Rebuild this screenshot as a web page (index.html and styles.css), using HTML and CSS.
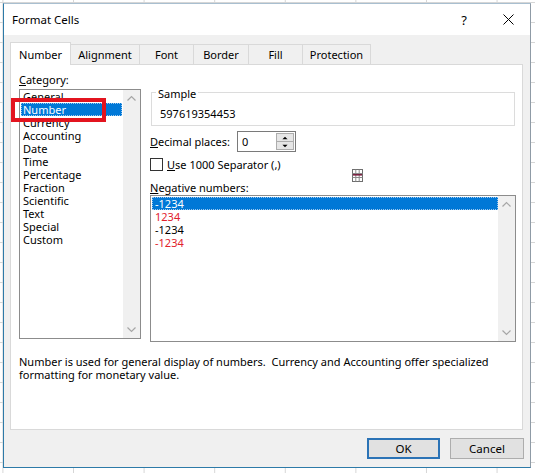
FILE: index.html
```html
<!DOCTYPE html>
<html lang="en">
<head>
  <meta charset="UTF-8" />
  <title>Format Cells</title>
  <link rel="stylesheet" href="styles.css">
</head>
<body>
  <div class="dialog">
    <!-- title bar -->
    <div class="titlebar">
      <span class="title">Format Cells</span>
      <span class="help">?</span>
      <svg class="close" width="11" height="11" viewBox="0 0 11 11">
        <path d="M0.5 0.5 L10.5 10.5 M10.5 0.5 L0.5 10.5" stroke="#000" stroke-width="1" fill="none" />
      </svg>
    </div>

    <div class="dialog-body">
      <div class="tabs">
        <div class="tab selected tab-number">Number</div>
        <div class="tab tab-alignment">Alignment</div>
        <div class="tab tab-font">Font</div>
        <div class="tab tab-border">Border</div>
        <div class="tab tab-fill">Fill</div>
        <div class="tab tab-protection">Protection</div>
      </div>

      <div class="panel">
        <div class="panel-main">
          <!-- category -->
          <div class="col-left">
            <div class="label"><u>C</u>ategory:</div>
            <div class="listbox cat-list">
              <div class="list-items">
                <div class="item">General</div>
                <div class="item selected">Number</div>
                <div class="item">Currency</div>
                <div class="item">Accounting</div>
                <div class="item">Date</div>
                <div class="item">Time</div>
                <div class="item">Percentage</div>
                <div class="item">Fraction</div>
                <div class="item">Scientific</div>
                <div class="item">Text</div>
                <div class="item">Special</div>
                <div class="item">Custom</div>
              </div>
              <div class="scrollbar">
                <svg width="17" height="17" viewBox="0 0 17 17"><polyline points="4.5,10.5 8.5,6.5 12.5,10.5" fill="none" stroke="#a6a6a6" stroke-width="1.2" /></svg>
                <svg width="17" height="17" viewBox="0 0 17 17"><polyline points="4.5,6.5 8.5,10.5 12.5,6.5" fill="none" stroke="#a6a6a6" stroke-width="1.2" /></svg>
              </div>
            </div>
          </div>

          <!-- options -->
          <div class="col-right">
            <div class="group">
              <div class="group-title">Sample</div>
              <div class="sample-value">597619354453</div>
            </div>

            <div class="decimal-row">
              <span class="decimal-label"><u>D</u>ecimal places:</span>
              <div class="spin-input">
                <span class="spin-value">0</span>
                <div class="spinner">
                  <div class="spin-btn"><svg width="14" height="7" viewBox="0 0 14 7"><polygon points="4,5 10,5 7,2" fill="#000" /></svg></div>
                  <div class="spin-btn"><svg width="14" height="7" viewBox="0 0 14 7"><polygon points="4,2 10,2 7,5" fill="#000" /></svg></div>
                </div>
              </div>
            </div>

            <div class="check-row">
              <span class="checkbox"></span>
              <span><u>U</u>se 1000 Separator (,)</span>
            </div>

            <div class="label neg-label"><u>N</u>egative numbers:</div>
            <div class="listbox neg-list">
              <div class="list-items">
                <div class="item selected">-1234</div>
                <div class="item red">1234</div>
                <div class="item">-1234</div>
                <div class="item red">-1234</div>
              </div>
              <div class="scrollbar">
                <svg width="17" height="17" viewBox="0 0 17 17"><polyline points="4.5,10.5 8.5,6.5 12.5,10.5" fill="none" stroke="#a6a6a6" stroke-width="1.2" /></svg>
                <svg width="17" height="17" viewBox="0 0 17 17"><polyline points="4.5,6.5 8.5,10.5 12.5,6.5" fill="none" stroke="#a6a6a6" stroke-width="1.2" /></svg>
              </div>
            </div>
          </div>
        </div>

        <p class="desc">
          <span class="desc-line">Number is used for general display of numbers.&nbsp; Currency and Accounting offer specialized</span>
          <span class="desc-line">formatting for monetary value.</span>
        </p>

        <!-- red annotation over the selected category -->
        <div class="annot-box"></div>

        <!-- cell cursor left on the screen -->
        <svg class="cell-cursor" width="11" height="13" viewBox="0 0 11 13">
          <rect x="0.5" y="0.5" width="10" height="12" fill="#fff" stroke="#6e6e6e" />
          <path d="M3.8 0.5 V12.5 M7.2 0.5 V12.5 M0.5 4.5 H10.5 M0.5 8.5 H10.5" stroke="#8a8a8a" fill="none" />
          <rect x="1" y="5" width="9" height="1.6" fill="#7b2142" />
        </svg>
      </div>

      <div class="buttons">
        <button class="btn btn-default">OK</button>
        <button class="btn">Cancel</button>
      </div>
    </div>
  </div>
</body>
</html>
```

FILE: styles.css
```css
html,
body {
  margin: 0;
}
body {
  width: 535px;
  height: 473px;
  overflow: hidden;
  font-family: "Noto Sans", "Open Sans", sans-serif;
  font-size: 11px;
  color: #000;
  background-color: #fff;
  /* excel sheet grid behind the dialog */
  background-image:
    linear-gradient(to right, #d6d6d6 1px, transparent 1px),
    linear-gradient(to bottom, #d6d6d6 1px, transparent 1px);
  background-size: 70.6px 100%, 100% 20px;
  background-position: 73px 0, 0 2px;
}

.dialog {
  box-sizing: border-box;
  width: 528px;
  height: 465px;
  margin: 3px 0 0 3px;
  border: 1px solid #2d7aa8;
  border-top-color: #a9bfd0;
  border-right-color: #8f9ba6;
  display: flex;
  flex-direction: column;
}

/* title bar */
.titlebar {
  height: 31px;
  background: #fff;
  display: flex;
  align-items: center;
  flex-shrink: 0;
}
.title {
  padding-left: 8px;
  font-size: 11.5px;
}
.help {
  margin-left: auto;
  font-size: 13px;
  margin-right: 36px;
}
.close {
  margin-right: 16px;
}

.dialog-body {
  flex: 1;
  background: #f0f0f0;
  padding-top: 7px;
}

/* tabs */
.tabs {
  display: flex;
  align-items: flex-end;
  height: 22px;
  padding-left: 6px;
}
.tab {
  box-sizing: border-box;
  height: 20px;
  line-height: 18px;
  padding-top: 1px;
  border: 1px solid #d9d9d9;
  border-bottom: none;
  margin-left: -1px;
  text-align: center;
}
.tab.selected {
  height: 23px;
  padding-top: 3px;
  margin-bottom: -1px;
  margin-left: 0;
  background: #fff;
  position: relative;
  z-index: 1;
}
.tab-number { width: 61px; }
.tab-alignment { width: 70px; }
.tab-font { width: 55px; }
.tab-border { width: 56px; }
.tab-fill { width: 55px; }
.tab-protection { width: 69px; }

/* panel */
.panel {
  position: relative;
  box-sizing: border-box;
  width: 513px;
  height: 366px;
  margin-left: 6px;
  padding: 7px 6px 0 8px;
  background: #fff;
  border: 1px solid #d9d9d9;
}
.panel-main {
  display: flex;
  align-items: flex-start;
  gap: 9px;
}
.col-left {
  width: 122px;
}
.col-right {
  width: 366px;
}
.label {
  line-height: 15px;
}
.col-left .label {
  margin-bottom: 2px;
}

/* list boxes */
.listbox {
  box-sizing: border-box;
  display: flex;
  background: #fff;
  border: 1px solid #8c8c8c;
  overflow: hidden;
}
.cat-list {
  height: 250px;
}
.neg-list {
  height: 147px;
}
.list-items {
  flex: 1;
  overflow: hidden;
}
.item {
  height: 13px;
  line-height: 13px;
  padding-left: 2px;
  margin: 0 1px;
  white-space: nowrap;
}
.item.selected {
  background: #0078d7;
  color: #fff;
  outline: 1px dotted #9ec8ee;
  outline-offset: -1px;
}
.neg-list .list-items {
  padding-top: 1px;
}
.neg-list .item {
  padding-left: 3px;
  margin-right: 0;
}
.item.red {
  color: #e2222c;
}
.scrollbar {
  width: 17px;
  background: #f0f0f0;
  display: flex;
  flex-direction: column;
  justify-content: space-between;
}
.scrollbar svg {
  display: block;
}

/* sample group */
.group {
  box-sizing: border-box;
  height: 34px;
  width: 364px;
  margin: 20px 0 0 1px;
  border: 1px solid #dcdcdc;
}
.group-title {
  width: fit-content;
  line-height: 15px;
  margin: -7px 0 0 4px;
  padding: 0 2px;
  background: #fff;
}
.sample-value {
  line-height: 15px;
  margin-top: 5px;
  padding-left: 8px;
}

/* decimal places */
.decimal-row {
  display: flex;
  align-items: center;
  margin-top: 5px;
  height: 21px;
}
.decimal-label {
  width: 87px;
}
.spin-input {
  box-sizing: border-box;
  width: 59px;
  height: 21px;
  border: 1px solid #7a7a7a;
  display: flex;
  align-items: center;
  justify-content: space-between;
}
.spin-value {
  padding-left: 4px;
}
.spinner {
  width: 16px;
  height: 15px;
  margin-right: 1px;
  border: 1px solid #adadad;
  display: flex;
  flex-direction: column;
}
.spin-btn {
  flex: 1;
  background: #e6e6e6;
  display: flex;
  align-items: center;
  justify-content: center;
}
.spin-btn + .spin-btn {
  border-top: 1px solid #adadad;
}
.spin-btn svg {
  display: block;
  width: 14px;
  height: 6px;
}

/* checkbox */
.check-row {
  display: flex;
  align-items: center;
  gap: 4px;
  margin-top: 5px;
  height: 14px;
}
.checkbox {
  box-sizing: border-box;
  width: 13px;
  height: 13px;
  border: 1px solid #333;
  background: #fff;
}

.neg-label {
  margin-top: 9px;
}

/* description */
.desc {
  margin: 13px 0 0;
  line-height: 13px;
}
.desc-line {
  display: block;
  white-space: nowrap;
}

/* overlays */
.annot-box {
  position: absolute;
  left: 0;
  top: 33px;
  width: 95px;
  height: 24px;
  box-sizing: border-box;
  border: 4px solid #e3141f;
}
.cell-cursor {
  position: absolute;
  left: 341px;
  top: 104px;
}

/* buttons */
.buttons {
  display: flex;
  justify-content: flex-end;
  gap: 10px;
  padding-right: 6px;
  margin-top: 8px;
}
.btn {
  box-sizing: border-box;
  height: 21px;
  width: 74px;
  font-family: inherit;
  font-size: 11.5px;
  background: #e1e1e1;
  border: 1px solid #adadad;
  padding: 0;
}
.btn-default {
  width: 73px;
  border: 2px solid #2b73b6;
}
```
